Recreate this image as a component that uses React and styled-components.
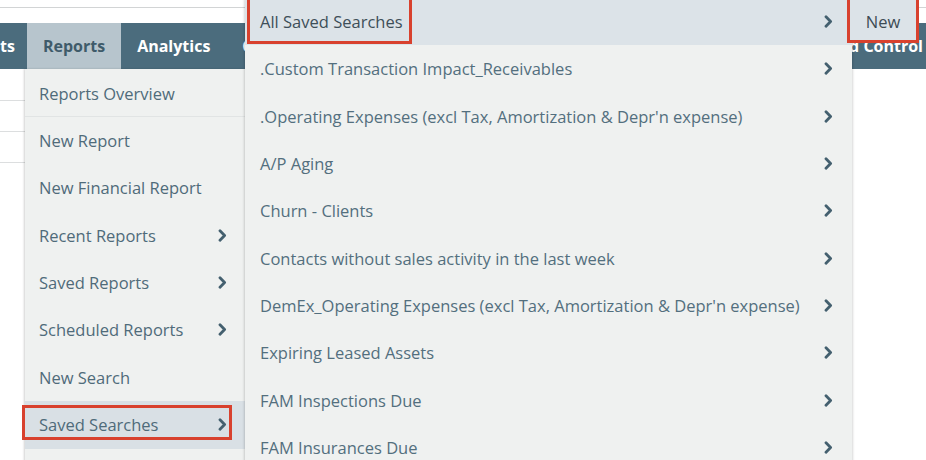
import styled, { createGlobalStyle } from "styled-components";

const GlobalStyle = createGlobalStyle`
  * {
    box-sizing: border-box;
  }
  body {
    margin: 0;
    background: #ffffff;
    font-family: "Open Sans", "Liberation Sans", sans-serif;
  }
`;

const reportItems = [
  { label: "Reports Overview", divider: true },
  { label: "New Report" },
  { label: "New Financial Report" },
  { label: "Recent Reports", more: true },
  { label: "Saved Reports", more: true },
  { label: "Scheduled Reports", more: true },
  { label: "New Search" },
  { label: "Saved Searches", more: true, active: true },
];

const savedSearches = [
  ".Custom Transaction Impact_Receivables",
  ".Operating Expenses (excl Tax, Amortization & Depr'n expense)",
  "A/P Aging",
  "Churn - Clients",
  "Contacts without sales activity in the last week",
  "DemEx_Operating Expenses (excl Tax, Amortization & Depr'n expense)",
  "Expiring Leased Assets",
  "FAM Inspections Due",
  "FAM Insurances Due",
];

function Chevron() {
  return (
    <ChevronIcon viewBox="0 0 9 13" aria-hidden="true">
      <polyline points="2,1.8 6.6,6.5 2,11.2" />
    </ChevronIcon>
  );
}

export default function App() {
  return (
    <>
      <GlobalStyle />
      <Page>
        <TopStrip>
          <Rule />
        </TopStrip>

        <NavBar>
          <NavGroup>
            <NavTab $first>ts</NavTab>
            <NavTab $active>Reports</NavTab>
            <NavTab>Analytics</NavTab>
            <NavTab>Customization</NavTab>
          </NavGroup>
          <NavTab $last>Period Control</NavTab>
        </NavBar>

        <TableArea>
          <TableRow />
          <TableRow />
          <TableRow />
        </TableArea>

        <ReportsMenu>
          {reportItems.map((item) => (
            <MenuItem
              key={item.label}
              $active={item.active}
              $divider={item.divider}
            >
              {item.label}
              {item.more && <Chevron />}
              {item.active && <Callout $inset="4px 13px 8px -3px" />}
            </MenuItem>
          ))}
        </ReportsMenu>

        <SearchMenu>
          <SearchItem $active>
            All Saved Searches
            <Chevron />
            <Callout $inset="-1px 440px 1px 2px" />
          </SearchItem>
          {savedSearches.map((label) => (
            <SearchItem key={label}>
              {label}
              <Chevron />
            </SearchItem>
          ))}
        </SearchMenu>

        <NewFlyout>New</NewFlyout>
      </Page>
    </>
  );
}

const Page = styled.div`
  position: relative;
  width: 926px;
  height: 460px;
  overflow: hidden;
  background: #ffffff;
`;

const TopStrip = styled.div`
  height: 23px;
  padding-top: 7px;
`;

const Rule = styled.div`
  border-top: 1px solid #d2d4d5;
`;

const NavBar = styled.div`
  display: flex;
  justify-content: space-between;
  height: 46px;
  background: #4b6c7d;
  overflow: hidden;
`;

const NavGroup = styled.div`
  display: flex;
`;

const NavTab = styled.div`
  display: flex;
  align-items: center;
  padding: 0 ${(p) => (p.$first ? "12px" : "16px")} 0
    ${(p) => (p.$first ? "0" : "16px")};
  margin-right: ${(p) => (p.$last ? "-13px" : "0")};
  white-space: nowrap;
  font-size: 16px;
  font-weight: 700;
  color: ${(p) => (p.$active ? "#3f5b6a" : "#ffffff")};
  background: ${(p) => (p.$active ? "#b7c5cd" : "transparent")};
`;

const TableArea = styled.div`
  width: 600px;
  padding-top: 1px;
`;

const TableRow = styled.div`
  height: 31px;
  border-bottom: 1px solid #dcdedf;
`;

const ReportsMenu = styled.div`
  position: absolute;
  left: 25px;
  top: 69px;
  width: 220px;
  height: 400px;
  padding-top: 1px;
  background: #eff1f0;
  box-shadow: -1px 0 2px rgba(0, 0, 0, 0.18);
  z-index: 1;
`;

const MenuItem = styled.div`
  position: relative;
  display: flex;
  align-items: center;
  justify-content: space-between;
  height: 47.33px;
  padding: 0 18px 0 14px;
  font-size: 16.5px;
  color: #4f6b7a;
  white-space: nowrap;
  background: ${(p) => (p.$active ? "#d9e0e5" : "transparent")};
  border-bottom: 1px solid ${(p) => (p.$divider ? "#e1e4e4" : "transparent")};
`;

const SearchMenu = styled.div`
  position: absolute;
  left: 245px;
  top: -2px;
  width: 607px;
  height: 480px;
  background: #eff1f0;
  box-shadow: 0 0 3px rgba(0, 0, 0, 0.28);
  z-index: 2;
`;

const SearchItem = styled.div`
  position: relative;
  display: flex;
  align-items: center;
  justify-content: space-between;
  height: 47.33px;
  padding: 0 19px 0 15px;
  font-size: 16.5px;
  color: ${(p) => (p.$active ? "#3e4f59" : "#536f7e")};
  white-space: nowrap;
  background: ${(p) => (p.$active ? "#dce3e8" : "transparent")};
`;

const ChevronIcon = styled.svg`
  width: 9px;
  height: 13px;
  flex: none;
  fill: none;
  stroke: #44606f;
  stroke-width: 2.8;
  stroke-linecap: round;
  stroke-linejoin: round;
`;

const Callout = styled.span`
  position: absolute;
  inset: ${(p) => p.$inset};
  border: 3px solid #d8412e;
  pointer-events: none;
`;

const NewFlyout = styled.div`
  position: absolute;
  left: 847px;
  top: -3px;
  width: 72px;
  height: 46px;
  display: flex;
  align-items: center;
  justify-content: center;
  padding-top: 3px;
  font-size: 16.5px;
  color: #3c4b54;
  background: #dce3e8;
  border: 3px solid #d8412e;
  z-index: 3;
`;
